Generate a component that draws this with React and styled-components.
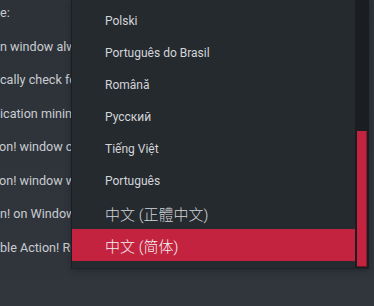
import { createGlobalStyle } from 'styled-components'
import styled from 'styled-components'

const Global = createGlobalStyle`
	html, body {
		margin: 0;
		padding: 0;
		width: 374px;
		height: 306px;
		overflow: hidden;
		background: #30353c;
	}
	body {
		font-family: Roboto, "Noto Sans", sans-serif;
	}
`

const Page = styled.div`
	position: relative;
	width: 374px;
	height: 306px;
	background: linear-gradient(180deg, #2d3238 0%, #31363d 100%);
	overflow: hidden;
`

const Settings = styled.div`
	display: flex;
	flex-direction: column;
	width: 71px;
	overflow: hidden;
	margin-top: -4px;
`

const Label = styled.div`
	height: 33.5px;
	line-height: 33.5px;
	font-size: 12.6px;
	color: #c9ccd1;
	white-space: nowrap;
	margin-left: ${(p) => p.shift || 0}px;
`

const Dropdown = styled.div`
	position: absolute;
	top: 0;
	left: 71px;
	right: 5px;
	height: 269px;
	display: flex;
	background: #252a2f;
	border-left: 1px solid #1b1e22;
	border-bottom: 1px solid #1f2327;
	box-sizing: border-box;
	box-shadow: 0 2px 6px rgba(0, 0, 0, 0.25);
`

const List = styled.div`
	flex: 1;
	overflow: hidden;
	display: flex;
	flex-direction: column;
	justify-content: flex-end;
	padding-bottom: 7px;
`

const Item = styled.div`
	flex: none;
	height: 32px;
	display: flex;
	align-items: center;
	padding-left: 33px;
	font-size: ${(p) => (p.cjk ? '15px' : '12px')};
	font-family: ${(p) => (p.cjk ? 'Roboto, "Noto Sans CJK SC", sans-serif' : 'Roboto, sans-serif')};
	font-weight: ${(p) => (p.cjk ? 300 : 400)};
	color: ${(p) => (p.active ? '#f2f2f2' : '#d2d5d9')};
	background: ${(p) => (p.active ? '#c4233f' : 'transparent')};
	white-space: nowrap;
`

const Track = styled.div`
	width: 14px;
	background: #1b1e21;
	display: flex;
	flex-direction: column;
	padding: 131px 2px 1px 2px;
	box-sizing: border-box;
`

const Thumb = styled.div`
	flex: 1;
	background: #c4233f;
	border-right: 1px solid #8e1a2e;
	border-bottom: 1px solid #6e1424;
`

const labels = [
	{ text: 'e:', shift: 0 },
	{ text: 'n window always on top', shift: 0 },
	{ text: 'cally check for updates', shift: 0 },
	{ text: 'ication minimized to tray', shift: 0 },
	{ text: 'on! window on startup', shift: -1 },
	{ text: 'on! window when recording', shift: -1 },
	{ text: 'n! on Windows startup', shift: 0 },
	{ text: 'ble Action! ROG overlay', shift: 0 },
]

const languages = [
	{ name: 'Polski' },
	{ name: 'Português do Brasil' },
	{ name: 'Română' },
	{ name: 'Русский' },
	{ name: 'Tiếng Việt' },
	{ name: 'Português' },
	{ name: '中文 (正體中文)', cjk: true },
	{ name: '中文 (简体)', cjk: true, active: true },
]

const App = () => {
	return (
		<Page>
			<Global />
			<Settings>
				{labels.map((l) => (
					<Label key={l.text} shift={l.shift}>{l.text}</Label>
				))}
			</Settings>
			<Dropdown>
				<List>
					{languages.map((lang) => (
						<Item key={lang.name} cjk={lang.cjk} active={lang.active}>
							{lang.name}
						</Item>
					))}
				</List>
				<Track>
					<Thumb />
				</Track>
			</Dropdown>
		</Page>
	)
}

export default App
